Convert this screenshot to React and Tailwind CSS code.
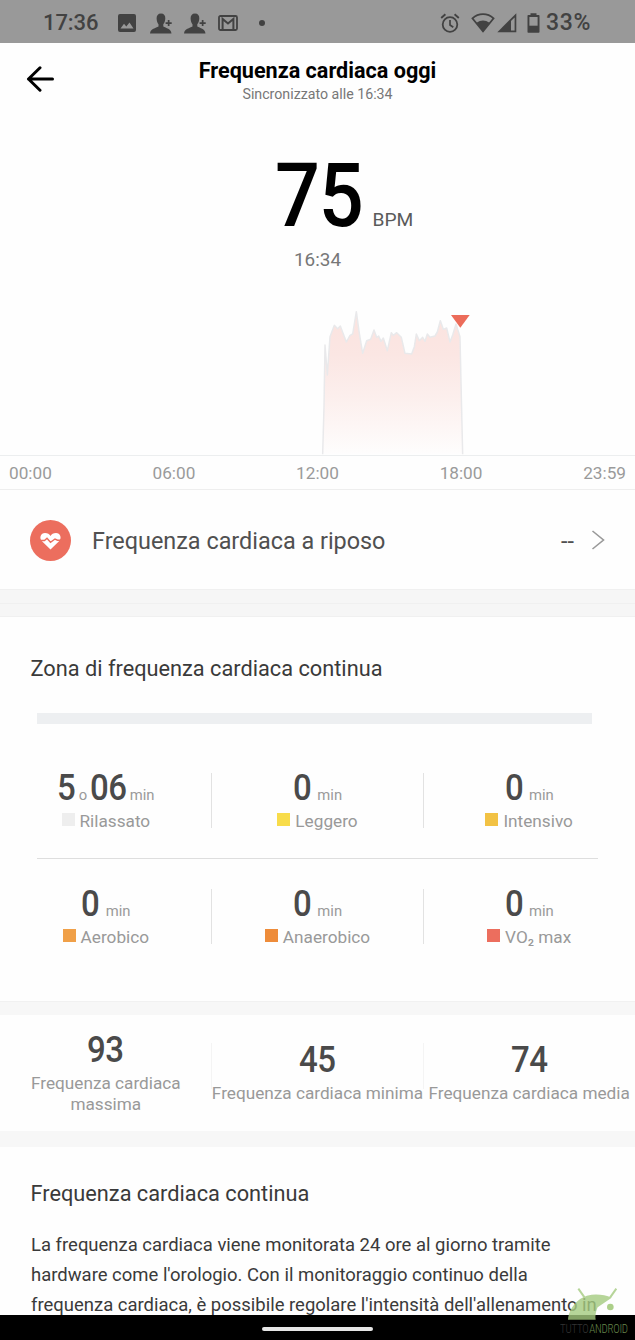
import React from "react";

const TIMES = ["00:00", "06:00", "12:00", "18:00", "23:59"];

const ZONES = [
  [
    { hours: "5", minutes: "06", label: "Rilassato", color: "bg-[#eeeeee]" },
    { minutes: "0", label: "Leggero", color: "bg-[#f8dc4a]" },
    { minutes: "0", label: "Intensivo", color: "bg-[#f2c244]" },
  ],
  [
    { minutes: "0", label: "Aerobico", color: "bg-[#f0a048]" },
    { minutes: "0", label: "Anaerobico", color: "bg-[#ee8c3a]" },
    { minutes: "0", label: "VO₂ max", color: "bg-[#ec6e5e]" },
  ],
];

const CURVE =
  "68,463 72,320 75,135 82,225 90,110 103,76 113,86 121,78 130,102 139,126 150,106 158,102 169,35 178,100 188,160 200,122 212,118 222,90 230,112 236,108 243,124 250,114 262,152 274,98 280,106 290,98 304,112 315,160 335,162 343,140 349,102 358,122 368,112 375,124 382,102 390,112 405,108 412,96 421,62 430,88 440,84 450,126 458,105 468,72 480,110 484,290 488,463";

function StatusBar() {
  return (
    <div className="flex h-[43px] items-center bg-[#999999] pl-[43px] pr-[43px] pt-[3px] text-[#424242]">
      <span className="w-[59px] text-[22px] font-medium leading-[28px] tracking-[-0.1px]">17:36</span>
      <svg className="ml-[16px] h-[18px] w-[18px]" viewBox="0 0 18 18" fill="currentColor">
        <path fillRule="evenodd" d="M2 0h14a2 2 0 0 1 2 2v14a2 2 0 0 1-2 2H2a2 2 0 0 1-2-2V2a2 2 0 0 1 2-2Zm.5 14.5h13l-4-6-3.2 4-2.3-2.7Z" />
      </svg>
      <PersonAdd className="ml-[14px]" />
      <PersonAdd className="ml-[12px]" />
      <svg className="ml-[12px] h-[16px] w-[20px]" viewBox="0 0 20 16" fill="none" stroke="currentColor">
        <rect x="1" y="1" width="18" height="14" rx="1.5" strokeWidth="1.8" />
        <path d="M4.600 14.500V4l5.400 4.500L15.400 4v10.500" strokeWidth="2" />
      </svg>
      <span className="ml-[20.5px] h-[6px] w-[6px] rounded-full bg-[#424242]" />
      <div className="ml-auto flex items-center">
        <svg className="h-[20px] w-[20px]" viewBox="0 0 20 20" fill="none" stroke="currentColor">
          <circle cx="10" cy="11.500" r="7.300" strokeWidth="1.800" />
          <path d="M10 7v5l3.300 2.300" strokeWidth="1.700" />
          <path d="M1.200 5 5.400 1.300M18.800 5l-4.200-3.700" strokeWidth="1.900" />
        </svg>
        <svg className="ml-[11px] h-[20px] w-[24px]" viewBox="0 0 24 20">
          <path d="M1.400 5.300C7.500-.3 16.500-.3 22.600 5.300L12 18.300Z" fill="none" stroke="currentColor" strokeWidth="1.700" />
          <path d="M5.500 9.800Q12 5 18.500 9.800L12 18.500Z" fill="currentColor" />
        </svg>
        <svg className="ml-[2px] h-[20px] w-[20px]" viewBox="0 0 20 20">
          <path d="M.300 19.200 19.300.200v19Z" fill="currentColor" />
          <path d="M14 8v9.500h3.600V4.400Z" fill="#999999" />
        </svg>
        <svg className="ml-[10px] h-[20px] w-[13px]" viewBox="0 0 13 20">
          <path d="M3.500 2V.300h6V2h2.200q.800 0 .800.800v16.200q0 .800-.800.800H1.300q-.800 0-.800-.800V2.800Q.500 2 1.300 2Z" fill="currentColor" />
          <path d="M2.400 4h8.200v8.700H2.400Z" fill="#999999" />
        </svg>
        <span className="ml-[6px] w-[46px] whitespace-nowrap text-[23px] font-medium leading-[28px] tracking-[0.700px]">33%</span>
      </div>
    </div>
  );
}

function PersonAdd({ className }) {
  return (
    <svg className={"h-[21px] w-[22px] " + className} viewBox="0 0 22 21" fill="currentColor">
      <path d="M11 .5c3 0 4.500 2 4.300 5-.1 2.600-1 4.500-2 5.800v2.300c2.700 1.500 7.700 2.300 8.200 6.900H0c.5-4.600 5.800-5.400 8.500-6.900v-2.300c-1-1.300-1.800-3.200-1.900-5.800C6.500 2.500 8 .5 11 .5Z" />
      <path d="M17.800 7h1.700v2.200h2.200v1.700h-2.200v2.200h-1.700v-2.200h-2.200V9.200h2.200Z" />
    </svg>
  );
}

function Chart() {
  return (
    <svg className="block h-[185px] w-full" viewBox="0 271 635 185">
      <defs>
        <linearGradient id="area" gradientUnits="userSpaceOnUse" x1="0" y1="35" x2="0" y2="463">
          <stop offset="0" stopColor="#fbe3df" />
          <stop offset="0.300" stopColor="#fbe6e3" />
          <stop offset="0.600" stopColor="#fcefed" />
          <stop offset="1" stopColor="#fefdfd" />
        </linearGradient>
      </defs>
      <path d="M0 455.500h635" stroke="#eceeef" strokeWidth="1" />
      <g transform="translate(300 300) scale(.33333)">
        <polygon points={CURVE} fill="url(#area)" />
        <polyline points={CURVE} fill="none" stroke="#e9e9eb" strokeWidth="4.500" strokeLinejoin="round" />
        <path d="M453 45h56l-28 38Z" fill="#ec6c5a" />
      </g>
    </svg>
  );
}

function Big({ children }) {
  return (
    <span className={children.length > 1 ? "inline-block w-[37px]" : "inline-block w-[18.500px]"}>
      <span className="inline-block origin-left scale-x-[0.880] whitespace-nowrap text-[37.500px] font-medium leading-[40px] tracking-[-0.700px] text-[#4a4a4a]">
        {children}
      </span>
    </span>
  );
}

function ZoneRow({ zones }) {
  return (
    <div className="grid grid-cols-3">
      {zones.map((z, i) => (
        <div key={z.label} className="relative flex h-[66px] flex-col items-center gap-[2px]">
          <div className="flex h-[40px] items-baseline text-[14.800px] text-[#9a9a9a]">
            {z.hours && (
              <>
                <Big>{z.hours}</Big>
                <span className="ml-[3px] mr-[3px]">o</span>
              </>
            )}
            <Big>{z.minutes}</Big>
            <span className={z.hours ? "ml-[2.500px]" : "ml-[6px]"}>min</span>
          </div>
          <div className="flex h-[24px] items-center gap-[5px]">
            <span className={"mb-[3px] h-[13px] w-[13px] " + z.color} />
            <span className="text-[17.200px] leading-[24px] text-[#999999]">{z.label}</span>
          </div>
          {i < 2 && <span className="absolute -right-[0.600px] top-[6px] h-[55px] w-px bg-[#e2e2e2]" />}
        </div>
      ))}
    </div>
  );
}

function Stat({ value, divider, children }) {
  return (
    <div className="relative flex flex-col items-center justify-center gap-[4px] pb-[3px]">
      <div className="h-[40px]">
        <Big>{value}</Big>
      </div>
      <span className="whitespace-nowrap text-center text-[17.200px] leading-[20.300px] text-[#999999]">{children}</span>
      {divider && <span className="absolute -right-[0.600px] top-[28px] h-[46px] w-px bg-[#f4f4f4]" />}
    </div>
  );
}

function Watermark() {
  return (
    <div className="absolute bottom-[4px] right-[6px] h-[49px] w-[69px]">
      <svg className="absolute left-[8px] top-0 h-[34px] w-[54px]" viewBox="101 52 162 102">
        <g opacity=".8">
          <path d="M101 150C104 114 132 80 172 75Q205 72 232 84L190 113Q181 132 184 150Z" fill="#a5cb80" />
          <path d="m132 57 19 27M246 57l-19 27" stroke="#a5cb80" strokeWidth="6" />
          <circle cx="228" cy="112" r="10" fill="#98c46c" />
        </g>
      </svg>
      <div className="absolute bottom-0 left-0 flex origin-left scale-x-[0.840] gap-[1px] whitespace-nowrap font-['Roboto_Condensed'] text-[13px] font-light leading-[14px] tracking-[-0.300px]">
        <span className="text-[#343434]">TUTTO</span>
        <span className="text-[#66864a]">ANDROID</span>
      </div>
    </div>
  );
}

export default function App() {
  return (
    <div className="relative flex h-[1340px] w-[635px] flex-col overflow-hidden bg-[#fefefe] font-[Roboto,sans-serif]">
      <StatusBar />

      <header className="relative flex h-[61px] flex-col items-center pt-[14px]">
        <svg className="absolute left-[26px] top-[23px] h-[26px] w-[30px]" viewBox="0 0 30 26" fill="none" stroke="#000" strokeWidth="3" strokeLinecap="round" strokeLinejoin="round">
          <path d="M26.500 13H2.500M14 1.800 2.500 13 14 24.200" />
        </svg>
        <h1 className="text-[21.600px] font-bold leading-[28px] text-black">Frequenza cardiaca oggi</h1>
        <p className="-mt-px text-[14.200px] leading-[20px] text-[#777777]">Sincronizzato alle 16:34</p>
      </header>

      <div className="mt-[47px] flex h-[90px] items-baseline pl-[274.500px]">
        <span className="w-[89px]">
          <span className="inline-block origin-left scale-x-[0.890] whitespace-nowrap text-[89px] font-medium leading-[90px] tracking-[-1.500px] text-black">75</span>
        </span>
        <span className="ml-[9px] text-[19.200px] text-[#5a5a5a]">BPM</span>
      </div>
      <p className="mt-[7px] text-center text-[18.900px] leading-[24px] text-[#777777]">16:34</p>

      <div className="-mt-px">
        <Chart />
      </div>
      <div className="flex h-[34px] justify-between border-b border-[#eeeeee] px-[9px] pt-px text-[17.200px] leading-[33px] text-[#9a9a9a]">
        {TIMES.map((t) => (
          <span key={t}>{t}</span>
        ))}
      </div>

      <div className="flex h-[99px] items-center pl-[30px] pr-[30px] pt-[2px]">
        <svg className="h-[41px] w-[41px]" viewBox="0 0 41 41">
          <circle cx="20.500" cy="20.500" r="20.500" fill="#ec6e5e" />
          <path d="M20.500 29.500 12 21.300C8.800 18 10.700 13 15 13c2.600 0 4.500 1.300 5.500 3 1-1.700 2.900-3 5.500-3 4.300 0 6.200 5 3 8.300Z" fill="#fff" />
          <path d="M9.500 20.500h5l2.500-2.200 3.500 4 4.500-3.300 2.500 1.200h4.500" fill="none" stroke="#ec6e5e" strokeWidth="1.400" />
        </svg>
        <span className="ml-[21px] mt-[1px] text-[23.400px] leading-[30px] text-[#505050]">Frequenza cardiaca a riposo</span>
        <span className="ml-auto mt-[1px] text-[23.400px] leading-[30px] text-[#505050]">--</span>
        <svg className="mb-[2px] ml-[17px] h-[20px] w-[14px]" viewBox="0 0 14 20" fill="none" stroke="#999" strokeWidth="1.600">
          <path d="m1.500 1 11 9-11 9" />
        </svg>
      </div>

      <div className="flex h-[28px] flex-col border-y border-[#f0f0f0] bg-[#f6f6f6] pt-[13px]">
        <div className="h-px bg-[#f0f0f0]" />
      </div>

      <section className="h-[384px] pt-[37px]">
        <h2 className="pl-[30.500px] text-[21.750px] leading-[30px] text-[#3a3a3a]">Zona di frequenza cardiaca continua</h2>
        <div className="ml-[37px] mt-[29px] h-[11px] w-[554.500px] bg-[#edeff1]" />
        <div className="pt-[43px]">
          <ZoneRow zones={ZONES[0]} />
        </div>
        <div className="ml-[37px] mr-[37px] mt-[25px] h-px bg-[#dedede]" />
        <div className="pt-[24px]">
          <ZoneRow zones={ZONES[1]} />
        </div>
      </section>

      <div className="h-[14px] border-t border-[#f1f1f1] bg-[#f7f7f7]" />

      <section className="grid h-[116px] grid-cols-3">
        <Stat value="93" divider>
          Frequenza cardiaca
          <br />
          massima
        </Stat>
        <Stat value="45" divider>
          Frequenza cardiaca minima
        </Stat>
        <Stat value="74">Frequenza cardiaca media</Stat>
      </section>

      <div className="h-[16px] bg-[#f7f7f7]" />

      <section className="h-[168px] overflow-hidden pl-[31px] pt-[32px]">
        <h2 className="-ml-[0.500px] text-[21.750px] leading-[30px] text-[#3a3a3a]">Frequenza cardiaca continua</h2>
        <p className="mt-[21px] whitespace-nowrap text-[18.480px] leading-[30px] text-[#3a3a3a]">
          La frequenza cardiaca viene monitorata 24 ore al giorno tramite
          <br />
          hardware come l'orologio. Con il monitoraggio continuo della
          <br />
          frequenza cardiaca, è possibile regolare l'intensità dell'allenamento in
        </p>
      </section>

      <nav className="flex h-[25px] justify-center bg-black pt-[12px]">
        <span className="h-[4px] w-[111px] rounded-full bg-[#e6e6e6]" />
      </nav>
      <Watermark />
    </div>
  );
}
